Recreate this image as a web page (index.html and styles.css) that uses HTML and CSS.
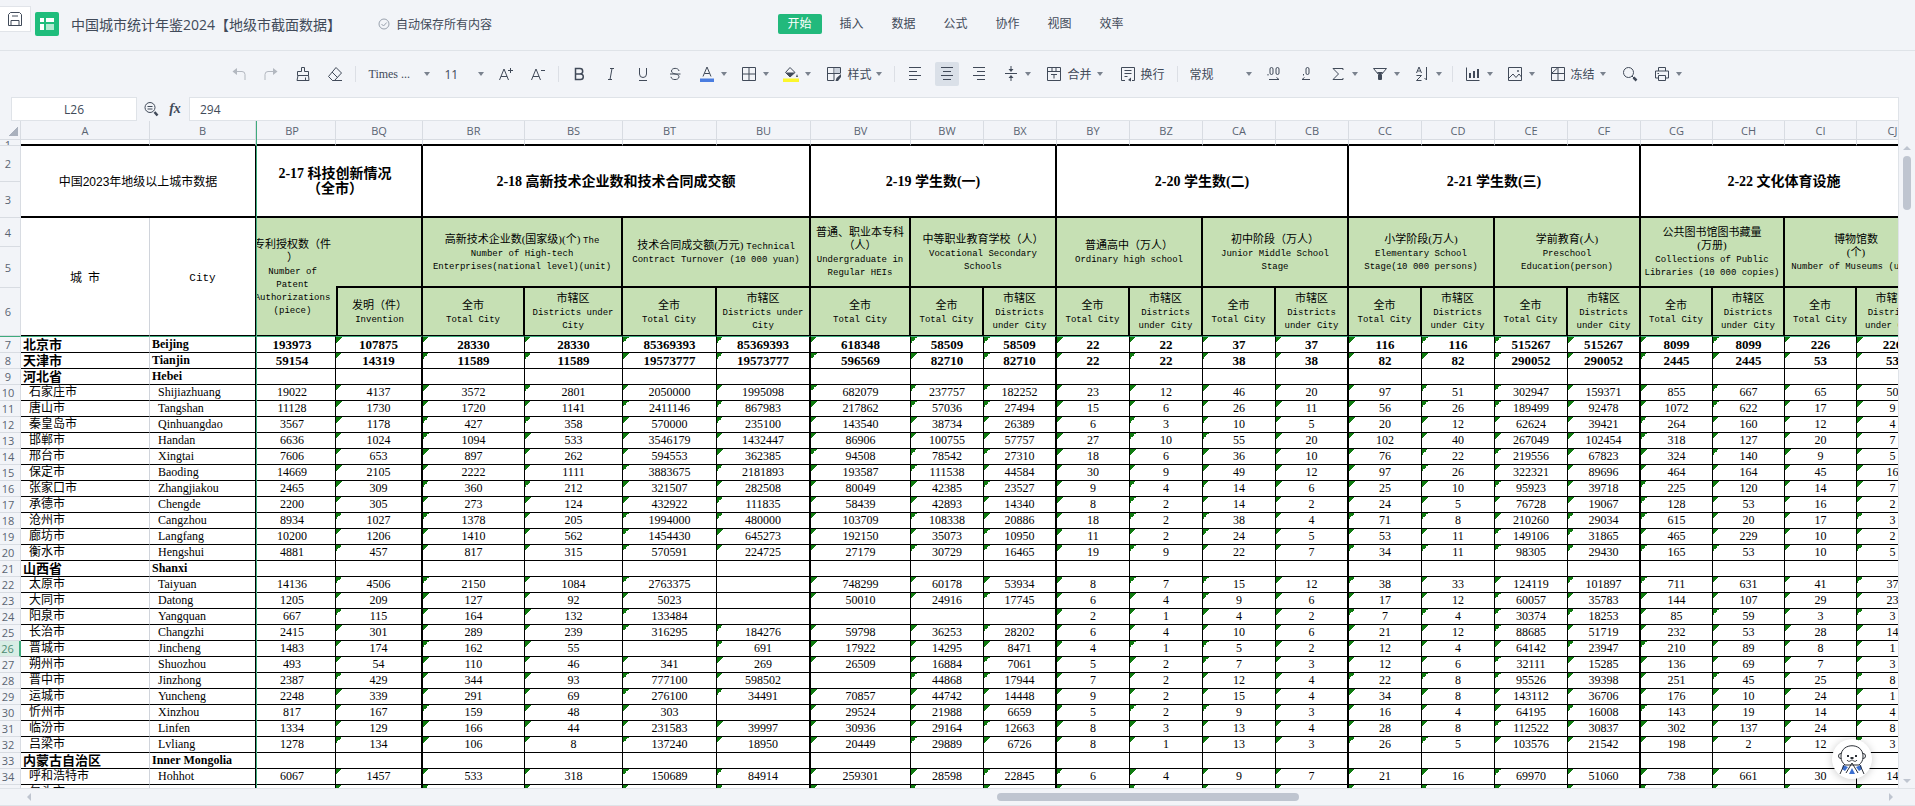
FILE: index.html
```html
<!DOCTYPE html>
<html lang="zh-CN">
<head>
    <meta charset="UTF-8">
    <meta name="viewport" content="width=device-width, initial-scale=1.0">
    <title>中国城市统计年鉴2024【地级市截面数据】</title>
    <link rel="stylesheet" href="styles.css">
</head>
<body>
    <header class="title-bar">
        <button class="save-btn" aria-label="保存">
            <svg class="icon" viewBox="0 0 16 16"><path d="M1.5 3.5l2-2h9l2 2v11h-13zM4 14.5v-5h8v5M5 5h6"/></svg>
        </button>
        <svg class="logo" viewBox="0 0 24 24"><rect width="24" height="24" rx="2" fill="#1fbd7c"/><path d="M5 6h4v4H5zM11 6h8v4h-8z" fill="#fff"/><path d="M11 12h8v6h-8z" fill="#b5ead2"/><path d="M5 12h4v6H5z" fill="#fff"/></svg>
        <h1 class="doc-title">中国城市统计年鉴2024【地级市截面数据】</h1>
        <span class="save-state">
            <svg class="state-icon" viewBox="0 0 12 12"><circle cx="6" cy="6" r="5"/><path d="M3.5 6l2 2 3.2-3.5"/></svg>
            自动保存所有内容
        </span>
        <nav class="tabs">
            <button class="tab active">开始</button>
            <button class="tab">插入</button>
            <button class="tab">数据</button>
            <button class="tab">公式</button>
            <button class="tab">协作</button>
            <button class="tab">视图</button>
            <button class="tab">效率</button>
        </nav>
    </header>

    <div class="toolbar">
        <button class="tool disabled" aria-label="撤销"><svg class="icon" viewBox="0 0 16 16"><path d="M2.5 5.5H11a3 3 0 0 1 3 3V14"/><path class="fill" d="M1.5 5.5L6 2v7z"/></svg></button>
        <button class="tool disabled" aria-label="恢复"><svg class="icon" viewBox="0 0 16 16"><path d="M13.5 5.5H5a3 3 0 0 0-3 3V14"/><path class="fill" d="M14.5 5.5L10 2v7z"/></svg></button>
        <button class="tool" aria-label="格式刷"><svg class="icon" viewBox="0 0 16 16"><path d="M6.5 5.5v-4h3v4h4v4h-11v-4zM3 9.5l-1 5h12l-.5-5M10.5 11.5v3"/></svg></button>
        <button class="tool" aria-label="清除"><svg class="icon" viewBox="0 0 16 16"><path d="M9 1.5l5.500 5.500-7 7.500h-2l-4-4zM5 6l5.500 5.500M5.500 14.500H15"/></svg></button>
        <span class="sep"></span>
        <select class="pick font-pick" aria-label="字体"><option>Times ...</option></select>
        <select class="pick size-pick" aria-label="字号"><option>11</option></select>
        <button class="tool" aria-label="增大字号"><svg class="icon" viewBox="0 0 16 16"><path d="M1.5 14L6 3l4.500 11M3 10.5h6M10 4.5h5M12.5 2v5"/></svg></button>
        <button class="tool" aria-label="减小字号"><svg class="icon" viewBox="0 0 16 16"><path d="M1.5 14L6 3l4.500 11M3 10.5h6M11 4.5h4"/></svg></button>
        <span class="sep"></span>
        <button class="tool" aria-label="加粗"><svg class="icon" viewBox="0 0 16 16"><path stroke-width="1.5" d="M4.5 2.5H9a2.700 2.700 0 0 1 0 5.400H4.500zM4.500 7.900h5a2.800 2.800 0 0 1 0 5.600h-5z"/></svg></button>
        <button class="tool" aria-label="倾斜"><svg class="icon" viewBox="0 0 16 16"><path d="M7 2.5h4M5 13.5h4M9 2.5l-2 11"/></svg></button>
        <button class="tool" aria-label="下划线"><svg class="icon" viewBox="0 0 16 16"><path d="M4.5 2v6a3.500 3.500 0 0 0 7 0V2M4 14.5h8"/></svg></button>
        <button class="tool" aria-label="删除线"><svg class="icon" viewBox="0 0 16 16"><path d="M12 5c-.3-3.500-7.500-3.500-7.500 0 0 4 7.500 2 7.500 5.800 0 3.700-8 3.700-8 0M3 8h10.5"/></svg></button>
        <button class="tool drop" aria-label="字体颜色"><svg class="icon" viewBox="0 0 16 16"><path d="M4 10.5L8 1l4 9.500M5.500 7.500h5"/><path d="M1 12.500h14v3.500H1z" fill="#4a7de0" stroke="none"/></svg><i class="caret"></i></button>
        <button class="tool drop" aria-label="边框"><svg class="icon" viewBox="0 0 16 16"><path d="M1.5 1.5h13v13h-13zM8 1.5v13M1.5 8h13"/></svg><i class="caret"></i></button>
        <button class="tool drop" aria-label="填充颜色"><svg class="icon" viewBox="0 0 16 16"><path d="M7 1.5l5 5-5 4.500-4.500-4.500z"/><path class="fill" d="M3 6.5h9L7 11zM14 8l1 3h-2z"/><path d="M0 12.5h16v3.500H0z" fill="#fbf62d" stroke="none"/></svg><i class="caret"></i></button>
        <button class="tool labelled"><svg class="icon" viewBox="0 0 16 16"><path d="M8 14.5H1.5v-13h13V7M8 1.5v13M1.5 7.5h13"/><path d="M8.5 2H14v5H8.500z" fill="#cbd2dc" stroke="none"/><path class="fill" d="M15 8v3l-3 4H9.500l1-3z"/></svg><span>样式</span><i class="caret"></i></button>
        <span class="sep"></span>
        <button class="tool" aria-label="左对齐"><svg class="icon" viewBox="0 0 16 16"><path d="M2 1.5h12M2 5.5h8M2 9.5h12M2 13.5h8"/></svg></button>
        <button class="tool pressed" aria-label="居中"><svg class="icon" viewBox="0 0 16 16"><path d="M2 1.5h12M4 5.5h8M2 9.5h12M4 13.5h8"/></svg></button>
        <button class="tool" aria-label="右对齐"><svg class="icon" viewBox="0 0 16 16"><path d="M2 1.5h12M6 5.5h8M2 9.5h12M6 13.5h8"/></svg></button>
        <button class="tool drop" aria-label="垂直对齐"><svg class="icon" viewBox="0 0 16 16"><path d="M2 7.5h12M8 0v4M8 15v-4"/><path class="fill" d="M5.5 3h5L8 6zM5.500 12h5L8 9z"/></svg><i class="caret"></i></button>
        <button class="tool labelled"><svg class="icon" viewBox="0 0 16 16"><path d="M1.5 1.5h13v13h-13zM1.500 5.500h13M6 1.500v4M10 1.500v4M5 8.500h6M8 8.500v4"/></svg><span>合并</span><i class="caret"></i></button>
        <button class="tool labelled"><svg class="icon" viewBox="0 0 16 16"><path d="M5 14.5H1.5v-13h13v13H12M4.500 4.500h7M4.500 7.500h7M4.500 10.500h3"/><path class="fill" d="M8 14l3-2.500v4z"/></svg><span>换行</span></button>
        <span class="sep"></span>
        <select class="pick format-pick" aria-label="数字格式"><option>常规</option></select>
        <button class="tool" aria-label="增加小数位"><svg class="icon" viewBox="0 0 16 16"><rect x="4" y="1.5" width="3" height="7" rx="1.5"/><rect x="10" y="1.5" width="3" height="7" rx="1.5"/><path d="M2 8v1.500M3 13.500h10M10.500 11.500l2.500 2"/></svg></button>
        <button class="tool" aria-label="减少小数位"><svg class="icon" viewBox="0 0 16 16"><rect x="8" y="1.5" width="3" height="7" rx="1.5"/><path d="M5.500 8v1.500M4 13.500h8M6.500 11.500L4 13.500"/></svg></button>
        <button class="tool drop" aria-label="求和"><svg class="icon" viewBox="0 0 16 16"><path d="M13 4V2.500H3L8.500 8 3 13.500h10V12"/></svg><i class="caret"></i></button>
        <button class="tool drop" aria-label="筛选"><svg class="icon" viewBox="0 0 16 16"><path d="M1.500 2.500h13L9.500 8.500v5h-3v-5z"/><path class="fill" d="M5 6h6L9 8.500V14H7V8.500z"/></svg><i class="caret"></i></button>
        <button class="tool drop" aria-label="排序"><svg class="icon" viewBox="0 0 16 16"><path d="M2.500 7L5 1l2.500 6M3.500 5h3M2.500 9.500h5l-5 5h5M12.500 1v13M10.500 12l2 2"/></svg><i class="caret"></i></button>
        <span class="sep"></span>
        <button class="tool drop" aria-label="图表"><svg class="icon" viewBox="0 0 16 16"><path d="M1.500 1.500v13h13"/><path stroke-width="2" d="M5 7v5M9 5v7M13 3v9"/></svg><i class="caret"></i></button>
        <button class="tool drop" aria-label="图片"><svg class="icon" viewBox="0 0 16 16"><path d="M1.500 1.500h13v13h-13zM2 12l4-4 3 3.500L12 8l2.500 3"/><circle cx="11" cy="5" r=".6"/></svg><i class="caret"></i></button>
        <button class="tool labelled"><svg class="icon" viewBox="0 0 16 16"><path d="M1.500 1.500h13v13h-13zM8 1.500v13M1.500 7.500h13M2 7l5.500-5"/></svg><span>冻结</span><i class="caret"></i></button>
        <button class="tool" aria-label="查找"><svg class="icon" viewBox="0 0 16 16"><circle cx="6.500" cy="6.500" r="5"/><path d="M10 10l2 2"/><path stroke-width="2.500" d="M11.500 11.500l3 3"/></svg></button>
        <button class="tool drop" aria-label="打印"><svg class="icon" viewBox="0 0 16 16"><path d="M4.500 5V1.500h7V5M4.500 12h-3V5h13v7h-3M4.500 9.500h7v5h-7zM3.500 7.500H5"/></svg><i class="caret"></i></button>
    </div>

    <div class="formula-bar">
        <input class="name-box" aria-label="单元格" value="L26">
        <svg class="icon find-cell" viewBox="0 0 16 16"><circle cx="7" cy="6.500" r="5"/><path d="M4.500 5.500h5M4.500 8h5"/><path stroke-width="2.500" d="M11.500 11l3 3.500"/></svg>
        <span class="fx">fx</span>
        <input class="formula" aria-label="编辑栏" value="294">
    </div>

    <main class="sheet">
        <div class="frozen">
            <table class="grid">
                <colgroup><col class="w21"><col class="w129"><col class="w106"></colgroup>
                <thead>
                    <tr class="letters"><th><i class="select-all"></i></th><th>A</th><th>B</th></tr>
                </thead>
                <tbody id="frozenBody">
                    <tr class="r1"><th><span class="sliver">1</span></th><td></td><td></td></tr>
                    <tr class="r2"><th>2</th><td class="area" colspan="2" rowspan="2">中国2023年地级以上城市数据</td></tr>
                    <tr class="r3"><th>3</th></tr>
                    <tr class="r4"><th>4</th><td class="field" rowspan="3">城&nbsp; 市</td><td class="field mono" rowspan="3">City</td></tr>
                    <tr class="r5"><th>5</th></tr>
                    <tr class="r6"><th>6</th></tr>
                </tbody>
            </table>
        </div>
        <div class="pane">
            <table class="grid pane-grid">
                <colgroup>
                    <col class="w87"><col class="w87"><col class="w102"><col class="w98"><col class="w94"><col class="w94"><col class="w100">
                    <col class="w73"><col class="w73"><col class="w73"><col class="w73"><col class="w73">
                    <col class="w73"><col class="w73"><col class="w73"><col class="w73"><col class="w73">
                    <col class="w72"><col class="w72"><col class="w72"><col class="w72">
                </colgroup>
                <thead>
                    <tr class="letters" id="letters"></tr>
                </thead>
                <tbody id="paneBody">
                    <tr class="r1" id="thinRow"></tr>
                    <tr class="r2">
                        <td class="topic" colspan="2" rowspan="2">2-17 科技创新情况<br>（全市）</td>
                        <td class="topic" colspan="4" rowspan="2">2-18 高新技术企业数和技术合同成交额</td>
                        <td class="topic" colspan="3" rowspan="2">2-19 学生数(一)</td>
                        <td class="topic" colspan="4" rowspan="2">2-20 学生数(二)</td>
                        <td class="topic" colspan="4" rowspan="2">2-21 学生数(三)</td>
                        <td class="topic" colspan="4" rowspan="2">2-22 文化体育设施</td>
                    </tr>
                    <tr class="r3"></tr>
                    <tr class="r4">
                        <td class="head patent" rowspan="3">专利授权数（件<br>）<br><small>Number of<br>Patent<br>Authorizations<br>(piece)</small></td>
                        <td class="head" rowspan="2"></td>
                        <td class="head" colspan="2" rowspan="2">高新技术企业数(国家级)(个) <small>The<br>Number of High-tech<br>Enterprises(national level)(unit)</small></td>
                        <td class="head" colspan="2" rowspan="2">技术合同成交额(万元) <small>Technical<br>Contract Turnover (10 000 yuan)</small></td>
                        <td class="head" rowspan="2">普通、职业本专科<br>（人）<br><small>Undergraduate in<br>Regular HEIs</small></td>
                        <td class="head" colspan="2" rowspan="2">中等职业教育学校（人）<br><small>Vocational Secondary<br>Schools</small></td>
                        <td class="head" colspan="2" rowspan="2">普通高中（万人）<br><small>Ordinary high school</small></td>
                        <td class="head" colspan="2" rowspan="2">初中阶段（万人）<br><small>Junior Middle School<br>Stage</small></td>
                        <td class="head" colspan="2" rowspan="2">小学阶段(万人)<br><small>Elementary School<br>Stage(10 000 persons)</small></td>
                        <td class="head" colspan="2" rowspan="2">学前教育(人)<br><small>Preschool<br>Education(person)</small></td>
                        <td class="head" colspan="2" rowspan="2">公共图书馆图书藏量<br>(万册)<br><small>Collections of Public<br>Libraries (10 000 copies)</small></td>
                        <td class="head" colspan="2" rowspan="2">博物馆数<br>(个)<br><small>Number of Museums (unit)</small></td>
                    </tr>
                    <tr class="r5"></tr>
                    <tr class="r6" id="scopeRow">
                        <td class="head invention">发明（件）<br><small>Invention</small></td>
                    </tr>
                </tbody>
            </table>
        </div>
        <div class="v-scroll"><i class="arrow up"></i><i class="thumb"></i><i class="arrow down"></i></div>
        <button class="assistant" aria-label="助手">
            <svg viewBox="0 0 40 40">
                <circle cx="9" cy="17" r="2.500"/><circle cx="31" cy="17" r="2.500"/>
                <path d="M9 18C8 3 32 3 31 18c0 4-2 6-4 8H13c-2-2-4-4-4-8z"/>
                <path class="eye" d="M15 16h2v2h-2zM23 16h2v2h-2zM18.500 18h3v2h-3z"/>
                <path d="M15 21c2 3 4 0 5 0s3 3 5 0"/>
                <path class="scarf" d="M11 26l5 2-3 4-3-2zM29 26l-5 2 3 4 3-2zM20 29l3 6h-6z"/>
                <path d="M8 35l4-9M32 35l-4-9M14 34l6-10M26 34l-6-10"/>
            </svg>
        </button>
    </main>

    <footer class="h-scroll"><i class="arrow left"></i><div class="track"><i class="thumb"></i></div><i class="arrow right"></i></footer>

    <script src="script.js"></script>
</body>
</html>
```
FILE: styles.css
```css
* {
    box-sizing: border-box;
}

body {
    margin: 0;
    height: 100vh;
    display: flex;
    flex-direction: column;
    overflow: hidden;
    background: #f2f4f8;
    color: #414a59;
    font-family: "Open Sans", "Noto Sans CJK SC", sans-serif;
    font-size: 12px;
}

button, input, select {
    font: inherit;
    color: inherit;
    margin: 0;
}

button {
    border: none;
    background: none;
    padding: 0;
    cursor: pointer;
}

.icon {
    width: 16px;
    height: 16px;
    flex: none;
    fill: none;
    stroke: #414a59;
}

.icon .fill {
    fill: #414a59;
    stroke: none;
}

/* 标题栏 */
.title-bar {
    position: relative;
    flex: none;
    display: flex;
    align-items: center;
    height: 51px;
    padding-bottom: 2px;
    border-bottom: 1px solid #dfe3e8;
}

.save-btn {
    display: flex;
    align-items: center;
    justify-content: center;
    align-self: flex-start;
    width: 31px;
    height: 26px;
    margin: 6px 4px 0 0;
    background: #fff;
    border: 1px solid #e1e4e9;
    border-left: none;
}

.logo {
    width: 24px;
    height: 24px;
}

.doc-title {
    margin: 0 0 0 12px;
    font-size: 14px;
    font-weight: normal;
    white-space: nowrap;
}

.save-state {
    display: flex;
    align-items: center;
    gap: 6px;
    margin-left: 37px;
    white-space: nowrap;
}

.state-icon {
    width: 12px;
    height: 12px;
    fill: none;
    stroke: #9aa2ae;
}

.tabs {
    position: absolute;
    left: 0;
    right: 4px;
    top: 14px;
    display: flex;
    justify-content: center;
    gap: 8px;
}

.tab {
    width: 44px;
    height: 20px;
    line-height: 20px;
    border-radius: 2px;
}

.tab.active {
    background: #22b97c;
    color: #fff;
}

/* 工具栏 */
.toolbar {
    flex: none;
    display: flex;
    align-items: center;
    justify-content: center;
    gap: 8px;
    height: 46px;
    padding-right: 4px;
}

.tool {
    display: flex;
    align-items: center;
    justify-content: center;
    width: 24px;
    height: 24px;
    border-radius: 2px;
}

.tool.disabled .icon {
    opacity: 0.35;
}

.tool.pressed {
    background: #dae0e8;
}

.tool.drop {
    width: 34px;
    justify-content: flex-start;
    gap: 6px;
    padding-left: 4px;
}

.tool.labelled {
    width: auto;
    gap: 5px;
    padding: 0 4px 0 5px;
    white-space: nowrap;
}

.caret {
    border: 3px solid transparent;
    border-top: 4px solid #7a828e;
    border-bottom: none;
}

.sep {
    width: 1px;
    height: 16px;
    background: #dcdfe5;
}

.pick {
    height: 24px;
    padding: 0 4px;
    border: none;
    appearance: none;
    background: url("data:image/svg+xml,%3Csvg xmlns='http://www.w3.org/2000/svg' viewBox='0 0 6 4'%3E%3Cpath d='M0 0h6L3 4z' fill='%237a828e'/%3E%3C/svg%3E") right 2px center / 6px 4px no-repeat;
}

.font-pick {
    width: 68px;
    font-family: "Liberation Serif", serif;
}

.size-pick {
    width: 46px;
}

.format-pick {
    width: 68px;
}

/* 编辑栏 */
.formula-bar {
    flex: none;
    display: flex;
    align-items: center;
    height: 24px;
    padding: 0 16px 0 11px;
}

.name-box, .formula {
    height: 24px;
    border: 1px solid #dfe3e8;
    background: #fff;
    outline: none;
}

.name-box {
    width: 126px;
    text-align: center;
}

.find-cell {
    margin-left: 6px;
}

.fx {
    width: 30px;
    padding-left: 2px;
    text-align: center;
    font: italic bold 14px "Liberation Serif", serif;
}

.formula {
    flex: 1;
    padding: 0 10px;
}

/* 表格 */
.sheet {
    position: relative;
    flex: 1;
    min-height: 0;
    display: flex;
    background: #fff;
    overflow: hidden;
}

.frozen {
    flex: none;
    border-right: 1px solid #3eab7d;
}

.pane {
    flex: 1;
    min-width: 0;
    overflow: hidden;
    border-right: 1px solid #dfe3e8;
}

.grid {
    table-layout: fixed;
    width: 0;
    border-collapse: separate;
    border-spacing: 0;
    color: #000;
    font-family: "Liberation Serif", "Noto Sans CJK SC", serif;
    line-height: 15px;
}

/* 冻结列右侧的滚动位置 */
.pane-grid {
    margin-left: -8px;
}

.w21 { width: 21px; }
.w129 { width: 129px; }
.w106 { width: 106px; }
.w72 { width: 72px; }
.w73 { width: 73px; }
.w87 { width: 87px; }
.w94 { width: 94px; }
.w98 { width: 98px; }
.w100 { width: 100px; }
.w102 { width: 102px; }

.grid th, .grid td {
    padding: 0;
    overflow: hidden;
    text-align: center;
    white-space: nowrap;
}

.grid th {
    background: #f2f4f8;
    border-right: 1px solid #d8dce2;
    border-bottom: 1px solid #d8dce2;
    color: #5a6472;
    font-family: "Open Sans", sans-serif;
    font-size: 11px;
    font-weight: normal;
}

.grid tbody th {
    padding-right: 4px;
}

.letters { height: 19px; }
.r1 { height: 6px; }
.r2, .r3 { height: 36px; }
.r4 { height: 29px; }
.r5 { height: 41px; }
.r6 { height: 48px; }
.row { height: 16px; }

.select-all {
    display: block;
    margin: 3px 0 0 9px;
    width: 9px;
    height: 9px;
    background: linear-gradient(to top left, #aab1bd 50%, transparent 50%);
}

.sliver {
    display: block;
    height: 5px;
    line-height: 9px;
    overflow: hidden;
}

.r1 td {
    border-right: 1px solid #d8dce2;
    border-bottom: 2px solid #000;
}

.grid .area {
    padding-top: 2px;
    border-right: 1px solid #000;
    border-bottom: 2px solid #000;
    font-family: "Liberation Sans", "Noto Sans CJK SC", sans-serif;
    font-size: 12px;
}

.field {
    border-right: 1px solid #d0d4db;
    border-bottom: 1px solid #000;
    font-size: 12px;
}

.grid .field {
    padding-top: 4px;
}

.field.mono {
    border-right-color: #000;
    font-family: "Liberation Mono", monospace;
    font-size: 11px;
}

.topic {
    border-right: 2px solid #000;
    border-bottom: 2px solid #000;
    font-size: 14px;
    font-weight: bold;
}

.head {
    background: #c6e0b4;
    border-right: 2px solid #000;
    border-bottom: 2px solid #000;
    font-size: 11px;
    line-height: 13px;
}

/* 行高小于外层，行距由单元格决定 */
.head small {
    font-family: "Liberation Mono", monospace;
    font-size: 9px;
    line-height: 9px;
}

.patent {
    border-right: none;
    border-bottom-width: 1px;
}

.r6 .head {
    border-bottom-width: 1px;
}

.invention {
    border-left: 2px solid #000;
}

.row td {
    border-right: 1px solid #000;
    border-bottom: 1px solid #000;
    font-size: 12px;
}

.row .edge {
    border-right-width: 2px;
}

.row.first {
    height: 17px;
}

.row.first td, .row.first th {
    border-top: 1px solid #3eab7d;
}

.row.province td {
    font-size: 13px;
    font-weight: bold;
}

.row .city {
    padding-left: 8px;
    text-align: left;
    border-right-color: #d0d4db;
}

.row .pinyin {
    padding-left: 8px;
    text-align: left;
}

.row.province .city, .row.province .pinyin {
    padding-left: 2px;
}

.row.province .pinyin {
    font-size: 12px;
}

/* 文本型数字的绿色角标 */
.tag {
    background: linear-gradient(to bottom right, #107c10 50%, transparent 50%) 0 0 / 6px 6px no-repeat;
}

.row.current th {
    background: #d8ede5;
    border-right: 2px solid #3eab7d;
    color: #4a8a72;
}

/* 滚动条 */
.arrow {
    width: 0;
    height: 0;
    border: 4px solid transparent;
}

.arrow.up { border-bottom-color: #bfc5d0; border-top: none; }
.arrow.down { border-top-color: #bfc5d0; border-bottom: none; }
.arrow.left { border-right-color: #bfc5d0; border-left: none; }
.arrow.right { border-left-color: #bfc5d0; border-right: none; }

.thumb {
    display: block;
    background: #bfc5d0;
    border-radius: 4px;
}

.v-scroll {
    flex: none;
    display: flex;
    flex-direction: column;
    align-items: center;
    width: 16px;
    padding: 25px 0 5px;
    background: #f2f4f8;
}

.v-scroll .thumb {
    width: 8px;
    height: 54px;
    margin: 6px 0 auto;
}

.h-scroll {
    flex: none;
    display: flex;
    align-items: center;
    height: 18px;
    padding: 0 22px 0 27px;
    border-top: 1px solid #dfe3e8;
    border-bottom: 1px solid #dfe3e8;
}

.track {
    flex: 1;
    margin: 0 4px;
}

.track .thumb {
    width: 16.3%;
    height: 8px;
    margin-left: 52%;
}

.assistant {
    position: absolute;
    right: 43px;
    bottom: 9px;
    width: 40px;
    height: 40px;
    border-radius: 50%;
    background: #fff;
    box-shadow: 0 1px 8px rgba(0, 0, 0, 0.2);
}

.assistant svg {
    display: block;
    fill: #fff;
    stroke: #2b2f36;
}

.assistant .eye {
    fill: #2b2f36;
    stroke: none;
}

.assistant .scarf {
    fill: #3b6fd0;
    stroke: none;
}
```
FILE: script.js
```js
const letters = ['BP', 'BQ', 'BR', 'BS', 'BT', 'BU', 'BV', 'BW', 'BX', 'BY', 'BZ', 'CA', 'CB', 'CC', 'CD', 'CE', 'CF', 'CG', 'CH', 'CI', 'CJ'];

// 每个主题最后一列，右侧用粗线
const edges = ['BQ', 'BU', 'BX', 'CB', 'CF'];

// 城市 | 拼音 | BP 到 CJ 的数值，"-" 为空单元格
const rows = [
    '北京市|Beijing|193973 107875 28330 28330 85369393 85369393 618348 58509 58509 22 22 37 37 116 116 515267 515267 8099 8099 226 226',
    '天津市|Tianjin|59154 14319 11589 11589 19573777 19573777 596569 82710 82710 22 22 38 38 82 82 290052 290052 2445 2445 53 53',
    '河北省|Hebei|',
    '石家庄市|Shijiazhuang|19022 4137 3572 2801 2050000 1995098 682079 237757 182252 23 12 46 20 97 51 302947 159371 855 667 65 50',
    '唐山市|Tangshan|11128 1730 1720 1141 2411146 867983 217862 57036 27494 15 6 26 11 56 26 189499 92478 1072 622 17 9',
    '秦皇岛市|Qinhuangdao|3567 1178 427 358 570000 235100 143540 38734 26389 6 3 10 5 20 12 62624 39421 264 160 12 4',
    '邯郸市|Handan|6636 1024 1094 533 3546179 1432447 86906 100755 57757 27 10 55 20 102 40 267049 102454 318 127 20 7',
    '邢台市|Xingtai|7606 653 897 262 594553 362385 94508 78542 27310 18 6 36 10 76 22 219556 67823 324 140 9 5',
    '保定市|Baoding|14669 2105 2222 1111 3883675 2181893 193587 111538 44584 30 9 49 12 97 26 322321 89696 464 164 45 16',
    '张家口市|Zhangjiakou|2465 309 360 212 321507 282508 80049 42385 23527 9 4 14 6 25 10 95923 39718 225 120 14 7',
    '承德市|Chengde|2200 305 273 124 432922 111835 58439 42893 14340 8 2 14 2 24 5 76728 19067 128 53 16 2',
    '沧州市|Cangzhou|8934 1027 1378 205 1994000 480000 103709 108338 20886 18 2 38 4 71 8 210260 29034 615 20 17 3',
    '廊坊市|Langfang|10200 1206 1410 562 1454430 645273 192150 35073 10950 11 2 24 5 53 11 149106 31865 465 229 10 2',
    '衡水市|Hengshui|4881 457 817 315 570591 224725 27179 30729 16465 19 9 22 7 34 11 98305 29430 165 53 10 5',
    '山西省|Shanxi|',
    '太原市|Taiyuan|14136 4506 2150 1084 2763375 - 748299 60178 53934 8 7 15 12 38 33 124119 101897 711 631 41 37',
    '大同市|Datong|1205 209 127 92 5023 - 50010 24916 17745 6 4 9 6 17 12 60057 35783 144 107 29 23',
    '阳泉市|Yangquan|667 115 164 132 133484 - - - - 2 1 4 2 7 4 30374 18253 85 59 3 3',
    '长治市|Changzhi|2415 301 289 239 316295 184276 59798 36253 28202 6 4 10 6 21 12 88685 51719 232 53 28 14',
    '晋城市|Jincheng|1483 174 162 55 - 691 17922 14295 8471 4 1 5 2 12 4 64142 23947 210 89 8 1',
    '朔州市|Shuozhou|493 54 110 46 341 269 26509 16884 7061 5 2 7 3 12 6 32111 15285 136 69 7 3',
    '晋中市|Jinzhong|2387 429 344 93 777100 598502 - 44868 17944 7 2 12 4 22 8 95526 39398 251 45 25 8',
    '运城市|Yuncheng|2248 339 291 69 276100 34491 70857 44742 14448 9 2 15 4 34 8 143112 36706 176 10 24 1',
    '忻州市|Xinzhou|817 167 159 48 303 - 29524 21988 6659 5 2 9 3 16 4 64195 16008 143 19 14 4',
    '临汾市|Linfen|1334 129 166 44 231583 39997 30936 29164 12663 8 3 13 4 28 8 112522 30837 302 137 24 8',
    '吕梁市|Lvliang|1278 134 106 8 137240 18950 20449 29889 6726 8 1 13 3 26 5 103576 21542 198 2 12 3',
    '内蒙古自治区|Inner Mongolia|',
    '呼和浩特市|Hohhot|6067 1457 533 318 150689 84914 259301 28598 22845 6 4 9 7 21 16 69970 51060 738 661 30 14',
    '包头市||- . . . . . . . . . . . . . . . . . . . .'
];
const provinces = ['北京市', '天津市', '河北省', '山西省', '内蒙古自治区'];
const currentRow = 26;

document.getElementById('letters').innerHTML = letters.map(l => `<th>${l}</th>`).join('');
document.getElementById('thinRow').innerHTML = letters.map(() => '<td></td>').join('');

// 第 6 行：全市 / 市辖区
const scopeRow = document.getElementById('scopeRow');
letters.slice(2).forEach(l => {
    const wide = l === 'BS' || l === 'BU';
    const isTotal = ['BR', 'BT', 'BV', 'BW', 'BY', 'CA', 'CC', 'CE', 'CG', 'CI'].includes(l);
    const under = wide ? 'Districts under<br>City' : 'Districts<br>under City';
    scopeRow.innerHTML += isTotal
        ? '<td class="head">全市<br><small>Total City</small></td>'
        : `<td class="head">市辖区<br><small>${under}</small></td>`;
});

let frozenHtml = '';
let paneHtml = '';
rows.forEach((line, i) => {
    const [city, pinyin, nums] = line.split('|');
    const values = nums ? nums.split(' ') : [];
    let cls = 'row';
    if (i === 0) cls += ' first';
    if (provinces.includes(city)) cls += ' province';
    if (i + 7 === currentRow) cls += ' current';

    // 最后一行只露出上沿，不写行号
    const num = i === rows.length - 1 ? '' : i + 7;
    frozenHtml += `<tr class="${cls}"><th>${num}</th><td class="city">${city}</td><td class="pinyin">${pinyin}</td></tr>`;
    paneHtml += `<tr class="${cls}">` + letters.map((l, c) => {
        const value = values[c] || '-';
        const names = [];
        if (c > 0 && value !== '-') names.push('tag');
        if (edges.includes(l)) names.push('edge');
        return `<td class="${names.join(' ')}">${value === '-' || value === '.' ? '' : value}</td>`;
    }).join('') + '</tr>';
});
document.getElementById('frozenBody').insertAdjacentHTML('beforeend', frozenHtml);
document.getElementById('paneBody').insertAdjacentHTML('beforeend', paneHtml);
```
